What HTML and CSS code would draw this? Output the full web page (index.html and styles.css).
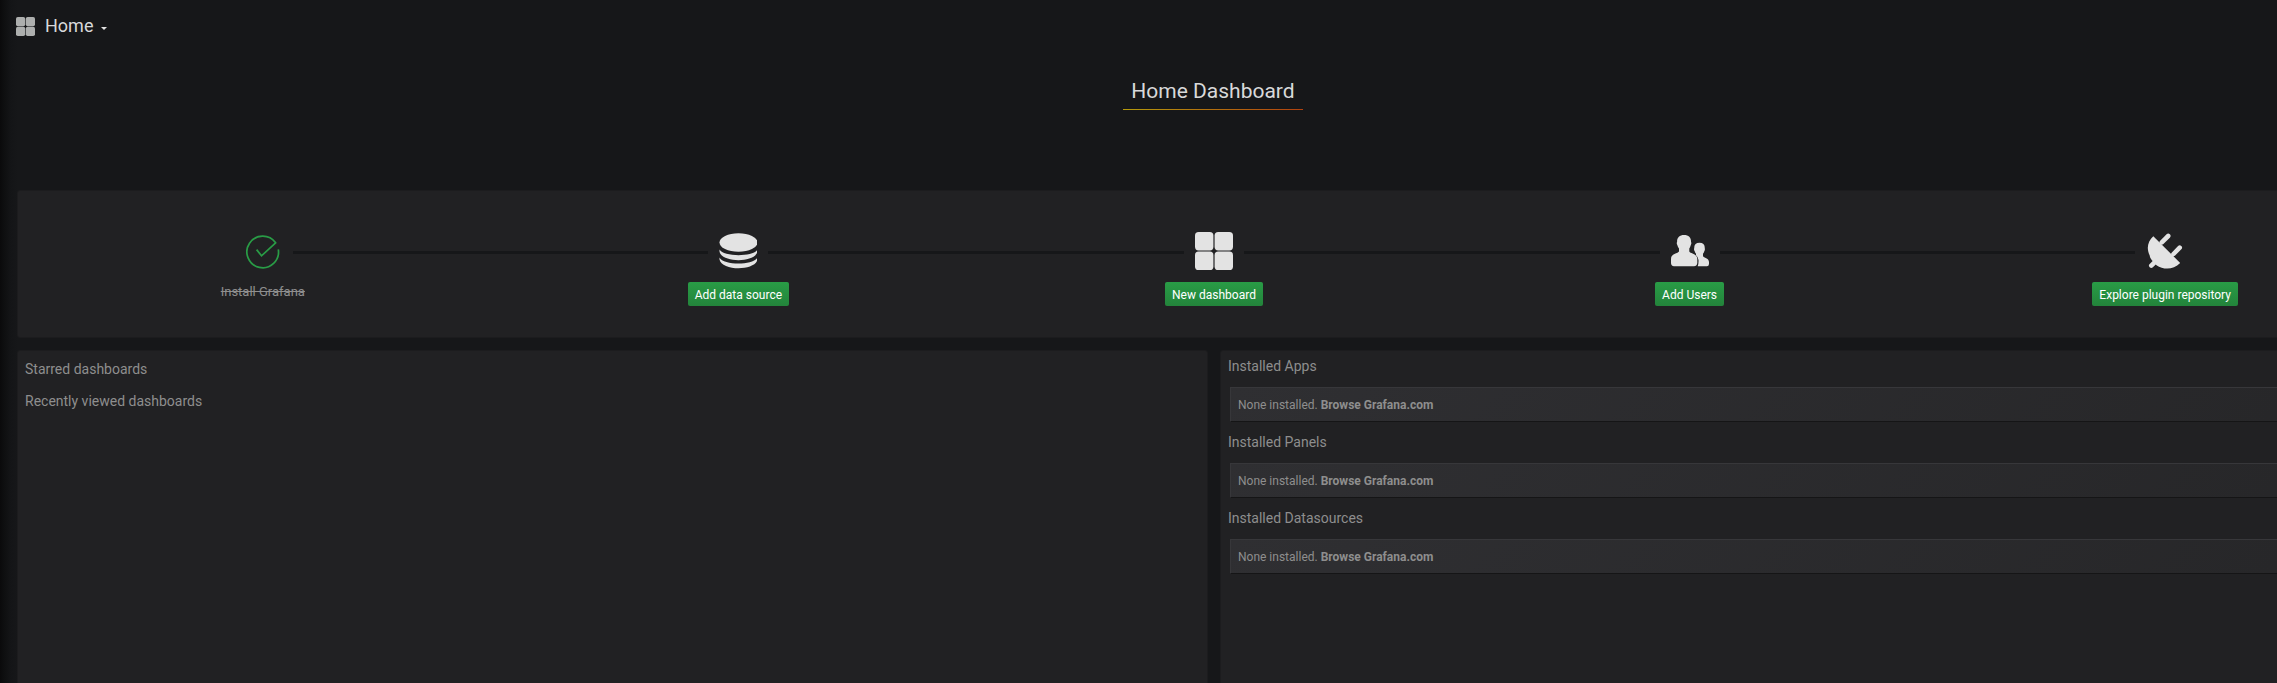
FILE: index.html
```html
<!DOCTYPE html>
<html lang="en">
<head>
<meta charset="utf-8">
<title>Home</title>
<link rel="stylesheet" href="styles.css">
</head>
<body>
<svg class="defs" aria-hidden="true">
  <symbol id="tiles" viewBox="0 0 38 38"><rect width="18.4" height="18.4" rx="3.6"/><rect x="19.6" width="18.4" height="18.4" rx="3.6"/><rect y="19.6" width="18.4" height="18.4" rx="3.6"/><rect x="19.6" y="19.6" width="18.4" height="18.4" rx="3.6"/></symbol>
</svg>
<div class="page">
  <header class="navbar">
    <svg class="nav-icon"><use href="#tiles"/></svg>
    <span class="nav-title">Home</span>
    <span class="caret"></span>
  </header>
  <div class="title-row"><h1 class="title">Home Dashboard</h1></div>
  <section class="panel steps">
    <div class="step done">
      <div class="track"><i class="line none"></i><span class="icon"><svg width="34" height="34" viewBox="0 0 34 34" fill="none" stroke="#299c46" stroke-width="1.7"><path d="M32.3 14.4A15.8 15.8 0 1 1 29.6 7.8L15.5 20.8L10.6 14.6"/></svg></span><i class="line"></i></div>
      <span class="label">Install Grafana</span>
    </div>
    <div class="step">
      <div class="track"><i class="line"></i><span class="icon"><svg width="38" height="38" viewBox="0 0 38 38"><ellipse cx="19.500" cy="10.500" rx="19" ry="9.300"/><path d="M.5 17.500C4.500 25 34.500 25 38.500 17.500V19.500C36.500 31 2.500 31 .5 19.500Z"/><path d="M.5 25.500C4.500 33.500 34.500 33.500 38.500 25.500V27.500C36.500 39.200 2.500 39.200 .5 27.500Z"/></svg></span><i class="line"></i></div>
      <a class="btn">Add data source</a>
    </div>
    <div class="step">
      <div class="track"><i class="line"></i><span class="icon"><svg width="38" height="38"><use href="#tiles"/></svg></span><i class="line"></i></div>
      <a class="btn">New dashboard</a>
    </div>
    <div class="step">
      <div class="track"><i class="line"></i><span class="icon"><svg width="38" height="38" viewBox="0 0 38 38"><path d="M13 3C18 3 20.3 6 20 10Q20.8 11 19.8 13Q19.2 15 18.3 16.5V19.5C20 22 26 21.5 26.3 27V31Q25.8 34.3 23 34.3H3Q0 34 0 31V27C0 21.5 6 22 8 19.5V16.5Q6.9 15 6.3 13Q5.3 11 6.1 10C5.8 6 8.4 3 13 3Z"/><path d="M28.5 10.7C32.2 10.7 34 13 33.7 16Q34.2 17.5 33.4 19Q33 20.8 32 21.8V24.2C34 26.4 37.8 25.8 38 30V32Q37.8 34.3 36 34.3H26.7Q27.7 32 27.5 28Q27.2 25 25 23.2V21.8Q24 20.5 23.6 19Q22.6 17.5 23.3 16C23 13 24.8 10.7 28.5 10.7Z"/></svg></span><i class="line"></i></div>
      <a class="btn">Add Users</a>
    </div>
    <div class="step">
      <div class="track"><i class="line"></i><span class="icon"><svg width="38" height="38" viewBox="0 -1 38 38"><path d="M7.3 3.2L34.2 30C27 37.2 17.500 36.800 10.500 32.200C7 28.500 4 25.800 3.700 22.500C0 15 2 8 7.300 3.200Z"/><path d="M5.300 32.600L10 28M15.800 9.400L22.200 3M27.500 21L33.700 14.700" fill="none" stroke="#e3e3e3" stroke-width="4.600" stroke-linecap="round"/></svg></span><i class="line none"></i></div>
      <a class="btn">Explore plugin repository</a>
    </div>
  </section>
  <div class="columns">
    <section class="panel left">
      <h6>Starred dashboards</h6>
      <h6>Recently viewed dashboards</h6>
    </section>
    <section class="panel right">
      <h6>Installed Apps</h6>
      <div class="card">None installed. <b>Browse Grafana.com</b></div>
      <h6>Installed Panels</h6>
      <div class="card">None installed. <b>Browse Grafana.com</b></div>
      <h6>Installed Datasources</h6>
      <div class="card">None installed. <b>Browse Grafana.com</b></div>
    </section>
  </div>
</div>
</body>
</html>
```
FILE: styles.css
```css
* { box-sizing: border-box; }
body { margin: 0; background: #161719; color: #8e8e8e; font-family: Roboto, sans-serif; overflow: hidden; }
.defs { position: absolute; width: 0; height: 0; }
.page {
  height: 683px; padding-left: 17px; overflow: hidden;
  background: linear-gradient(to right, #0a0a0b 0, #0f1011 5px, #141517 11px, #161719 18px);
}
.navbar { height: 52px; display: flex; align-items: center; width: 2394px; }
.nav-icon { width: 19px; height: 19px; margin: 0 10px 0 -1px; fill: #adafae; }
.nav-title { font-size: 18px; line-height: 24px; color: #d8d9da; }
.caret { margin: 5px 0 0 8px; border: 3.5px solid transparent; border-top-color: #e3e3e3; border-bottom: 0; }
.title-row { height: 138px; padding-top: 20px; width: 2392px; display: flex; justify-content: center; align-items: flex-start; }
.title {
  margin: 0; width: 180px; height: 38px; text-align: center; font-size: 21px; font-weight: 400; line-height: 38px;
  color: #d8d9da; border-bottom: 1px solid; border-image: linear-gradient(to right, #b59b0c, #b0410f) 1;
}
.panel { background: #212123; border: 1px solid #1c1c1e; border-radius: 3px; }
.steps { width: 2394px; height: 148px; padding: 37px 7px 0; display: grid; grid-template-columns: repeat(5, 475.6px); }
.step { display: flex; flex-direction: column; align-items: center; }
.track { align-self: stretch; height: 49px; display: flex; align-items: center; }
.line { flex: 1; height: 3px; background: #161719; }
.line.none { visibility: hidden; }
.icon { width: 60px; display: flex; justify-content: center; margin-bottom: 3px; fill: #e3e3e3; }
.done .icon { margin-bottom: 1px; }
.label { margin-top: 5px; font-size: 13px; line-height: 19px; text-decoration: line-through; }
.btn {
  margin-top: 5px; height: 24px; padding: 0 7px; font-size: 12px; line-height: 26px; white-space: nowrap;
  color: #fff; border-radius: 2px; background: linear-gradient(#299c46, #23843b);
}
.columns { display: grid; grid-template-columns: 1191px 1191px; gap: 12px; margin-top: 12px; height: 340px; }
.left, .right { padding: 0 7px; }
h6 { margin: 0; font-size: 14px; font-weight: 400; line-height: 20px; }
.left { padding-top: 8px; }
.left h6 { margin-bottom: 12px; }
.right { padding-top: 5px; }
.card {
  height: 35px; margin: 11px 2px 10px; padding-left: 7px; font-size: 12px; line-height: 35px;
  border: 1px solid #37373a; border-right: 0; border-bottom: 1px solid #151516;
  background: linear-gradient(135deg, #2f2f32, #262628);
}
```
